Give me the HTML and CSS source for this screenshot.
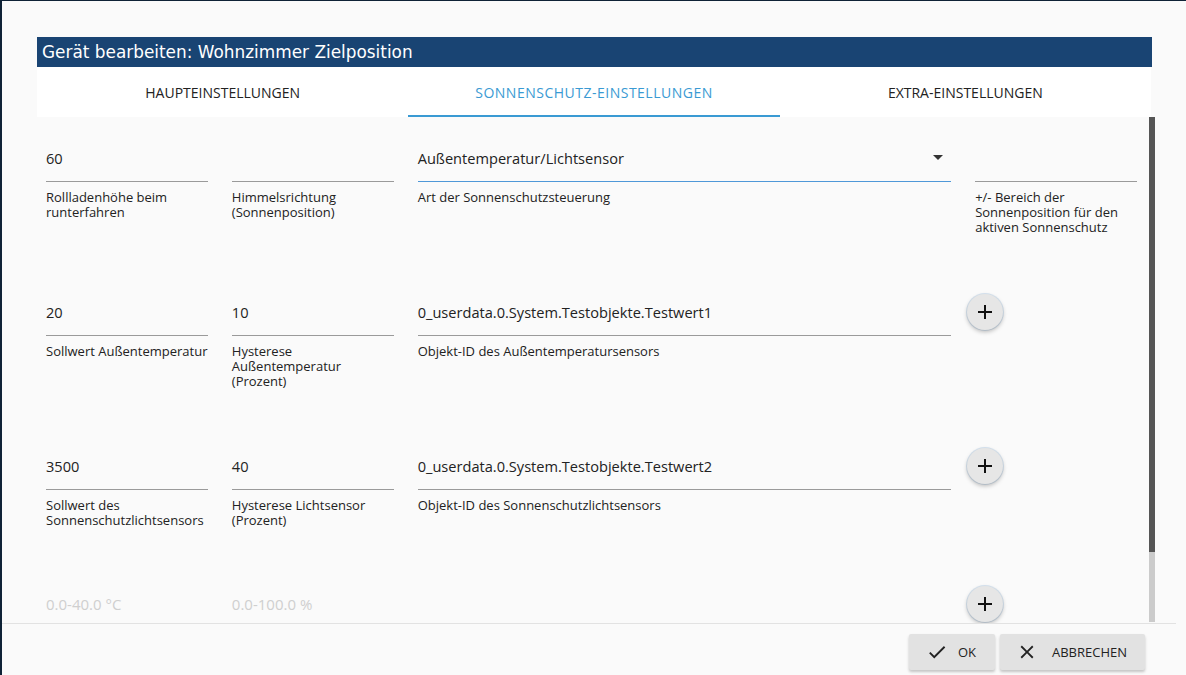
FILE: index.html
```html
<!DOCTYPE html>
<html lang="de">
<head>
<meta charset="utf-8">
<title>Gerät bearbeiten</title>
<link rel="stylesheet" href="styles.css">
</head>
<body>
<div class="dialog">
  <div class="header"><h1 class="title">Gerät bearbeiten: Wohnzimmer Zielposition</h1></div>
  <div class="tabs">
    <div class="tab">HAUPTEINSTELLUNGEN</div>
    <div class="tab active">SONNENSCHUTZ-EINSTELLUNGEN</div>
    <div class="tab">EXTRA-EINSTELLUNGEN</div>
  </div>
  <div class="body">
    <div class="scroll">
      <div class="row r1">
        <div class="field"><div class="input">60</div><div class="label">Rollladenhöhe beim runterfahren</div></div>
        <div class="field"><div class="input"></div><div class="label">Himmelsrichtung (Sonnenposition)</div></div>
        <div class="field wide"><div class="input select">Außentemperatur/Lichtsensor<span class="arrow"></span></div><div class="label">Art der Sonnenschutzsteuerung</div></div>
        <div class="field"><div class="input"></div><div class="label">+/- Bereich der Sonnenposition für den aktiven Sonnenschutz</div></div>
      </div>
      <div class="row r2">
        <div class="field"><div class="input">20</div><div class="label">Sollwert Außentemperatur</div></div>
        <div class="field"><div class="input">10</div><div class="label">Hysterese Außentemperatur (Prozent)</div></div>
        <div class="field wide"><div class="input">0_userdata.0.System.Testobjekte.Testwert1</div><div class="label">Objekt-ID des Außentemperatursensors</div></div>
        <div class="btncell"><button class="fab"><svg viewBox="0 0 24 24" width="24" height="24"><path d="M19 13h-6v6h-2v-6H5v-2h6V5h2v6h6v2z"/></svg></button></div>
      </div>
      <div class="row r3">
        <div class="field"><div class="input">3500</div><div class="label">Sollwert des Sonnenschutzlichtsensors</div></div>
        <div class="field"><div class="input">40</div><div class="label">Hysterese Lichtsensor (Prozent)</div></div>
        <div class="field wide"><div class="input">0_userdata.0.System.Testobjekte.Testwert2</div><div class="label">Objekt-ID des Sonnenschutzlichtsensors</div></div>
        <div class="btncell"><button class="fab"><svg viewBox="0 0 24 24" width="24" height="24"><path d="M19 13h-6v6h-2v-6H5v-2h6V5h2v6h6v2z"/></svg></button></div>
      </div>
      <div class="row r4">
        <div class="field"><div class="input placeholder">0.0-40.0 °C</div></div>
        <div class="field"><div class="input placeholder">0.0-100.0 %</div></div>
        <div class="field wide"></div>
        <div class="btncell"><button class="fab"><svg viewBox="0 0 24 24" width="24" height="24"><path d="M19 13h-6v6h-2v-6H5v-2h6V5h2v6h6v2z"/></svg></button></div>
      </div>
    </div>
    <div class="scrollbar"><div class="thumb"></div><div class="track"></div></div>
  </div>
  <div class="footer">
    <button class="btn ok"><svg viewBox="0 0 24 24" width="22" height="22"><path d="M9 16.17L4.83 12l-1.42 1.41L9 19 21 7l-1.41-1.41z"/></svg><span>OK</span></button>
    <button class="btn cancel"><svg viewBox="0 0 24 24" width="22" height="22"><path d="M19 6.41L17.59 5 12 10.59 6.41 5 5 6.41 10.59 12 5 17.59 6.41 19 12 13.41 17.59 19 19 17.59 13.41 12z"/></svg><span>ABBRECHEN</span></button>
  </div>
</div>
</body>
</html>
```
FILE: styles.css
```css
* { box-sizing: border-box; }
html, body { margin: 0; padding: 0; }
body {
  width: 1186px;
  height: 675px;
  overflow: hidden;
  background: #0f2236;
  font-family: "Open Sans", "Noto Sans", sans-serif;
  color: #222;
}
.dialog {
  margin: 1px 0 0 2px;
  height: 674px;
  background: #fafafa;
  display: flex;
  flex-direction: column;
}
.header {
  margin: 36px 34px 0 35px;
  height: 30px;
  background: #194473;
  display: flex;
  align-items: center;
  padding-left: 5px;
}
.title {
  margin: 0;
  font-family: "DejaVu Sans", Verdana, sans-serif;
  font-weight: normal;
  font-size: 16.9px;
  color: #fff;
}
.tabs {
  margin: 0 35px 0 35px;
  height: 50px;
  background: #fff;
  display: grid;
  grid-template-columns: 1fr 1fr 1fr;
}
.tab {
  display: flex;
  align-items: center;
  justify-content: center;
  font-size: 14px;
  color: #222;
  border-bottom: 2px solid transparent;
  padding-top: 3px;
}
.tab.active {
  color: #3a9ad3;
  border-bottom-color: #3a9ad3;
  letter-spacing: 0.5px;
}
.body {
  margin-left: 35px;
  width: 1118px;
  height: 506px;
  display: flex;
  overflow: hidden;
}
.scroll {
  flex: 1;
  padding: 20px 12px 0 9px;
  overflow: hidden;
}
.scrollbar {
  width: 6px;
  display: flex;
  flex-direction: column;
}
.thumb { height: 435px; background: #555; }
.track { height: 70px; background: #cbcbcb; }
.row {
  display: grid;
  grid-template-columns: repeat(6, 1fr);
  column-gap: 24px;
  align-items: start;
}
.r1, .r2 { height: 154px; }
.r3 { height: 138px; }
.field { display: flex; flex-direction: column; }
.field.wide { grid-column: span 3; }
.input {
  height: 45px;
  border-bottom: 1px solid #9a9a9a;
  display: flex;
  align-items: center;
  font-size: 14.6px;
  color: #222;
  padding-bottom: 3px;
}
.input.select {
  border-bottom-color: #4f98d8;
  justify-content: space-between;
  padding-right: 8px;
}
.arrow {
  width: 0;
  height: 0;
  border-left: 5px solid transparent;
  border-right: 5px solid transparent;
  border-top: 5px solid #333;
}
.input.placeholder { color: #cfcfcf; font-size: 15px; }
.label {
  margin-top: 8px;
  font-size: 13px;
  line-height: 15px;
  color: #222;
}
.btncell { padding-top: 3px; margin-left: -8px; }
.fab {
  width: 36px;
  height: 36px;
  border-radius: 50%;
  border: none;
  background: #e6e6e6;
  box-shadow: 0 2px 4px rgba(0,0,0,0.25), 0 0 0 1px rgba(120,170,220,0.25);
  display: flex;
  align-items: center;
  justify-content: center;
  padding: 0;
}
.fab svg { fill: #111; }
.footer {
  margin-right: 10px;
  border-top: 1px solid #e2e2e2;
  padding: 10px 31px 0 0;
  display: flex;
  justify-content: flex-end;
  gap: 5px;
}
.btn {
  height: 36px;
  border: none;
  background: #e2e2e2;
  box-shadow: 0 2px 3px rgba(0,0,0,0.22);
  border-radius: 2px;
  display: flex;
  align-items: center;
  font-family: "Open Sans", "Noto Sans", sans-serif;
  font-size: 13px;
  color: #222;
  padding: 0;
}
.btn svg { fill: #222; }
.btn.ok { width: 86px; padding-left: 17px; gap: 10px; }
.btn.cancel { width: 145px; padding-left: 16px; gap: 14px; }
```
